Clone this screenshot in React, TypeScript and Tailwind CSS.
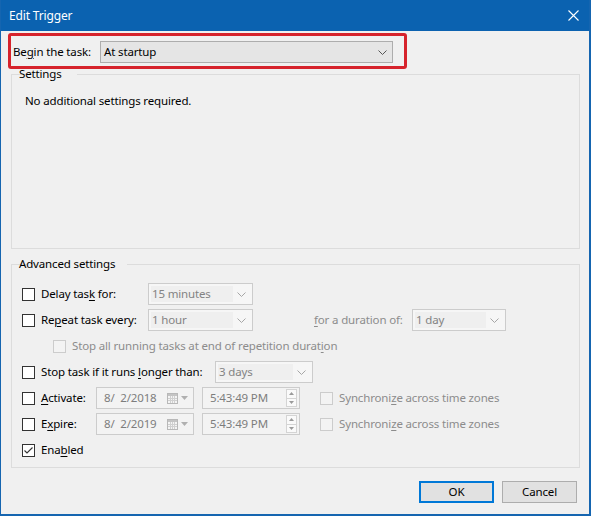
import React from "react";

const font = { fontFamily: '"Noto Sans", "Open Sans", sans-serif' };

function Chevron({ color = "#a6a6a6" }: { color?: string }) {
  return (
    <svg width="9" height="5" viewBox="0 0 9 5" className="shrink-0">
      <path d="M0.5 0.5 L4.5 4.5 L8.5 0.5" fill="none" stroke={color} strokeWidth="1" />
    </svg>
  );
}

function Checkbox({ checked = false, disabled = false }: { checked?: boolean; disabled?: boolean }) {
  return (
    <span
      className={
        "w-[13px] h-[13px] shrink-0 flex items-center justify-center border " +
        (disabled ? "border-[#cccccc] bg-[#f3f3f3]" : "border-[#333333] bg-white")
      }
    >
      {checked && (
        <svg width="11" height="11" viewBox="0 0 11 11">
          <path d="M1.5 5.5 L4 8 L9.5 2.5" fill="none" stroke="#333333" strokeWidth="1.1" />
        </svg>
      )}
    </span>
  );
}

function DisabledCombo({ value, width }: { value: string; width: string }) {
  return (
    <div className={"h-[22px] shrink-0 border border-[#cccccc] bg-[#f6f6f6] flex items-center p-[2px] " + width}>
      <span className="flex-1 h-full bg-[#efefef] pl-[1px] flex items-center text-[#838383]">{value}</span>
      <span className="w-[17px] flex justify-center">
        <Chevron />
      </span>
    </div>
  );
}

function CalendarIcon() {
  return (
    <svg width="11" height="11" viewBox="0 0 11 11" className="shrink-0">
      <rect x="0.5" y="0.5" width="10" height="10" fill="#f4f4f4" stroke="#b8b8b8" />
      <rect x="1" y="1" width="9" height="2" fill="#c4c4c4" />
      <path d="M1 5.5 H10 M1 7.5 H10 M3.5 3 V10 M5.5 3 V10 M7.5 3 V10" stroke="#d0d0d0" strokeWidth="1" />
    </svg>
  );
}

function DateBox({ value }: { value: string }) {
  return (
    <div className="w-[98px] h-[22px] border border-[#cccccc] bg-[#f3f3f3] flex items-center pl-[7px] pr-[5px]">
      <span className="flex-1 text-[#7d7d7d] whitespace-pre">{value}</span>
      <CalendarIcon />
      <svg width="7" height="4" viewBox="0 0 7 4" className="ml-[3px] shrink-0">
        <path d="M0 0 H7 L3.5 4 Z" fill="#b0b0b0" />
      </svg>
    </div>
  );
}

function TimeBox() {
  return (
    <div className="w-[98px] h-[22px] border border-[#cccccc] bg-[#f3f3f3] flex items-center pl-[7px] pr-[2px]">
      <span className="flex-1 text-[#7d7d7d]">5:43:49 PM</span>
      <div className="flex flex-col w-[11px] h-[18px]">
        <span className="flex-1 border border-[#d4d4d4] bg-[#fafafa] flex items-center justify-center">
          <svg width="5" height="3" viewBox="0 0 5 3">
            <path d="M0 3 H5 L2.5 0 Z" fill="#9a9a9a" />
          </svg>
        </span>
        <span className="flex-1 border border-t-0 border-[#d4d4d4] bg-[#fafafa] flex items-center justify-center">
          <svg width="5" height="3" viewBox="0 0 5 3">
            <path d="M0 0 H5 L2.5 3 Z" fill="#9a9a9a" />
          </svg>
        </span>
      </div>
    </div>
  );
}

function Sync({ u }: { u: string }) {
  return (
    <div className="flex items-center ml-[20px]">
      <Checkbox disabled />
      <span className="ml-[6px] text-[#8c8c8c]">
        Synchroni<u className="underline-offset-2">{u}</u>e across time zones
      </span>
    </div>
  );
}

export default function App() {
  return (
    <div
      className="relative w-[591px] h-[516px] bg-[#f0f0f0] border-l border-r-2 border-b-2 border-[#1565b0] flex flex-col text-[11.5px] leading-4 tracking-[-0.15px] text-black overflow-hidden"
      style={font}
    >
      {/* Title bar */}
      <div className="h-[31px] shrink-0 bg-[#0b62b0] flex items-center justify-between pl-[8px] pr-[10px] text-white text-[12px]">
        <span>Edit Trigger</span>
        <svg width="11" height="11" viewBox="0 0 11 11">
          <path d="M0.5 0.5 L10.5 10.5 M10.5 0.5 L0.5 10.5" stroke="white" strokeWidth="1.1" />
        </svg>
      </div>

      <div className="flex-1 flex flex-col pl-[10px] pr-[9px]">
        {/* Begin the task */}
        <div className="mt-[10px] h-[22px] flex items-center">
          <span className="ml-[2px] w-[87px]">
            Be<u className="underline-offset-2">g</u>in the task:
          </span>
          <div className="w-[293px] h-[22px] border border-[#adadad] bg-[#e5e5e5] flex items-center pl-[3px] pr-[5px]">
            <span className="flex-1">At startup</span>
            <Chevron color="#555555" />
          </div>
        </div>

        {/* Settings */}
        <fieldset className="mt-[3px] h-[183px] border border-[#dcdcdc] pl-[13px]">
          <legend className="ml-[5px] px-[2px] -translate-x-[13px]">Settings</legend>
          <p className="mt-[11px]">No additional settings required.</p>
        </fieldset>

        {/* Advanced settings */}
        <fieldset className="mt-[7px] border border-[#dcdcdc] pl-[10px] pt-[11px] pb-[6px]">
          <legend className="ml-[5px] px-[2px] -translate-x-[10px]">Advanced settings</legend>
          <div className="flex flex-col gap-[4px]">
            <div className="h-[22px] flex items-center">
              <Checkbox />
              <span className="ml-[6px] w-[107px]">
                Delay tas<u className="underline-offset-2">k</u> for:
              </span>
              <DisabledCombo value="15 minutes" width="w-[105px]" />
            </div>

            <div className="h-[22px] flex items-center">
              <Checkbox />
              <span className="ml-[6px] w-[107px]">
                Re<u className="underline-offset-2">p</u>eat task every:
              </span>
              <DisabledCombo value="1 hour" width="w-[105px]" />
              <span className="ml-[61px] w-[98px] text-[#8c8c8c] whitespace-nowrap">
                <u className="underline-offset-2">f</u>or a duration of:
              </span>
              <DisabledCombo value="1 day" width="w-[94px]" />
            </div>

            <div className="h-[22px] flex items-center pl-[31px]">
              <Checkbox disabled />
              <span className="ml-[6px] text-[#8c8c8c]">
                Stop all running tasks at end of repetition durat<u className="underline-offset-2">i</u>on
              </span>
            </div>

            <div className="h-[22px] flex items-center">
              <Checkbox />
              <span className="ml-[6px] w-[174px]">
                Stop task if it runs <u className="underline-offset-2">l</u>onger than:
              </span>
              <DisabledCombo value="3 days" width="w-[98px]" />
            </div>

            <div className="h-[22px] flex items-center">
              <Checkbox />
              <span className="ml-[6px] w-[55px]">
                <u className="underline-offset-2">A</u>ctivate:
              </span>
              <DateBox value="8/  2/2018" />
              <span className="w-[8px]" />
              <TimeBox />
              <Sync u="z" />
            </div>

            <div className="h-[22px] flex items-center">
              <Checkbox />
              <span className="ml-[6px] w-[55px]">
                E<u className="underline-offset-2">x</u>pire:
              </span>
              <DateBox value="8/  2/2019" />
              <span className="w-[8px]" />
              <TimeBox />
              <Sync u="z" />
            </div>

            <div className="h-[22px] flex items-center">
              <Checkbox checked />
              <span className="ml-[6px]">
                Ena<u className="underline-offset-2">b</u>led
              </span>
            </div>
          </div>
        </fieldset>

        {/* Buttons */}
        <div className="mt-[13px] flex justify-end gap-[8px] pr-[3px]">
          <button className="w-[75px] h-[22px] border-2 border-[#0078d7] bg-[#e1e1e1] flex items-center justify-center">
            OK
          </button>
          <button className="w-[75px] h-[22px] border border-[#adadad] bg-[#e1e1e1] flex items-center justify-center">
            Cancel
          </button>
        </div>
      </div>

      {/* Red highlight annotation */}
      <div className="absolute left-[7px] top-[33px] w-[399px] h-[36px] border-[3px] border-[#d6232c] rounded-[3px] pointer-events-none" />
    </div>
  );
}
